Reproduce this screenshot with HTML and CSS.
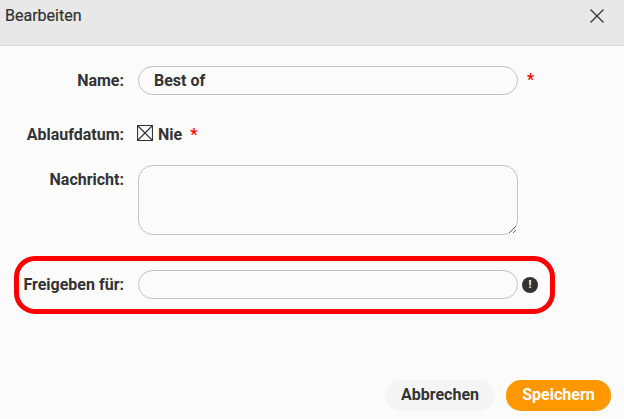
FILE: index.html
```html
<!DOCTYPE html>
<html lang="de">
<head>
  <meta charset="UTF-8">
  <title>Bearbeiten</title>
  <link rel="stylesheet" href="styles.css">
</head>
<body>
  <div class="dialog">
    <div class="header">
      <span class="title">Bearbeiten</span>
      <svg class="close" width="16" height="16" viewBox="0 0 16 16">
        <path d="M1.5 1.5L14.5 14.5M14.5 1.5L1.5 14.5" />
      </svg>
    </div>

    <div class="form">
      <div class="row row-name">
        <label class="label">Name:</label>
        <input class="field" type="text" value="Best of">
        <span class="req req-name">*</span>
      </div>

      <div class="row row-date">
        <label class="label">Ablaufdatum:</label>
        <svg class="check" width="16" height="16" viewBox="0 0 16 16">
          <path d="M0.5 0.5H15.5V15.5H0.5Z M0.5 0.5L15.5 15.5 M15.5 0.5L0.5 15.5" />
        </svg>
        <span class="never">Nie</span>
        <span class="req">*</span>
      </div>

      <div class="row row-msg">
        <label class="label label-top">Nachricht:</label>
        <textarea class="area"></textarea>
      </div>

      <div class="row row-share">
        <label class="label">Freigeben für:</label>
        <input class="field" type="text">
        <span class="info">!</span>
      </div>
    </div>

    <div class="footer">
      <button class="btn btn-cancel">Abbrechen</button>
      <button class="btn btn-save">Speichern</button>
    </div>

    <div class="highlight"></div>
  </div>
</body>
</html>
```

FILE: styles.css
```css
* {
  box-sizing: border-box;
}
html, body {
  margin: 0;
  height: 100%;
}
body {
  font-family: Roboto, "Liberation Sans", sans-serif;
  color: #333;
  background: #fbfbfb;
  overflow: hidden;
}
.dialog {
  position: relative;
  display: flex;
  flex-direction: column;
  height: 419px;
}
.header {
  display: flex;
  align-items: flex-start;
  justify-content: space-between;
  flex: none;
  height: 46px;
  padding: 8px 19px 0 5px;
  background: #e8e8e8;
  border-bottom: 1px solid #dcdcdc;
}
.title {
  margin-top: -1px;
  font-size: 16px;
  line-height: 17px;
  font-weight: 400;
  -webkit-text-stroke: 0.2px #333;
}
.close path {
  fill: none;
  stroke: #333;
  stroke-width: 1.3;
}
.form {
  flex: 1;
  padding-top: 20px;
}
.row {
  display: flex;
  align-items: center;
}
.row-date {
  margin-top: 25px;
  height: 28px;
}
.row-msg {
  margin-top: 17px;
  align-items: flex-start;
}
.row-share {
  margin-top: 35px;
}
.label {
  flex: none;
  width: 124px;
  margin-right: 14px;
  text-align: right;
  font-size: 16px;
  font-weight: 700;
}
.label-top {
  margin-top: 5px;
}
.field {
  flex: none;
  width: 380px;
  height: 29px;
  padding: 0 15px;
  border: 1px solid #c2c2c2;
  border-radius: 15px;
  background: #fbfbfb;
  font-family: inherit;
  font-size: 16px;
  font-weight: 700;
  color: #333;
}
.area {
  display: block;
  flex: none;
  width: 380px;
  height: 70px;
  border: 1px solid #c2c2c2;
  border-radius: 15px;
  background: #fbfbfb;
}
.req {
  color: #f00;
  font-size: 16px;
  font-weight: 700;
  margin-left: 8px;
}
.req-name {
  align-self: flex-start;
  margin-top: 4px;
  margin-left: 9px;
}
.check {
  flex: none;
  margin: -2px 0 0 -1px;
}
.check path {
  fill: none;
  stroke: #333;
  stroke-width: 1.2;
}
.never {
  margin-left: 5px;
  font-size: 16px;
  font-weight: 700;
}
.info {
  flex: none;
  width: 16px;
  height: 16px;
  margin-left: 4px;
  border-radius: 50%;
  background: #333;
  color: #fff;
  font-size: 11px;
  line-height: 16px;
  font-weight: 700;
  text-align: center;
}
.footer {
  display: flex;
  justify-content: flex-end;
  gap: 11px;
  flex: none;
  padding: 0 13px 8px 0;
}
.btn {
  height: 31px;
  padding: 0 0 2px;
  border: 0;
  border-radius: 15px;
  font-family: inherit;
  font-size: 16px;
  font-weight: 700;
}
.btn-cancel {
  width: 110px;
  background: #f5f5f5;
  color: #333;
}
.btn-save {
  width: 105px;
  background: #ff9800;
  color: #fff;
}
/* annotation drawn over the form */
.highlight {
  position: absolute;
  left: 14px;
  top: 256px;
  width: 541px;
  height: 58px;
  border: 5px solid #f00;
  border-radius: 21px;
  pointer-events: none;
}
```
